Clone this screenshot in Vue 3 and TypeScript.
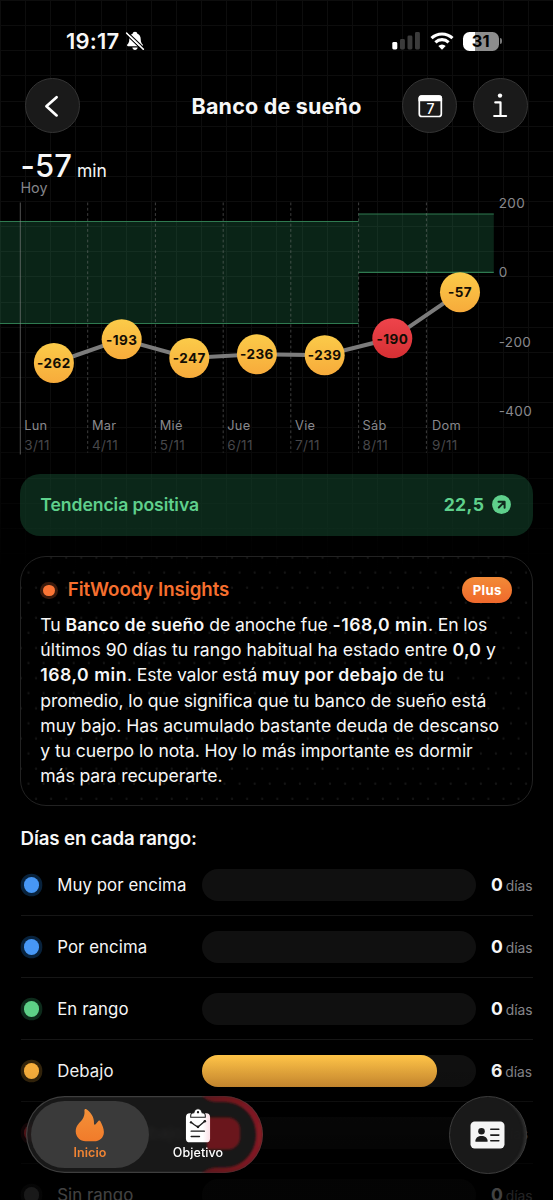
<script setup lang="ts">
interface DayPoint {
  day: string
  date: string
  value: number
  x: number
  y: number
  labelX: number
  low?: boolean
}
interface RangeRow {
  name: string
  tone: string
  days: number
}

const points: DayPoint[] = [
  { day: 'Lun', date: '3/11', value: -262, x: 53.9, y: 163, labelX: 24.2 },
  { day: 'Mar', date: '4/11', value: -193, x: 121.7, y: 139.3, labelX: 92 },
  { day: 'Mié', date: '5/11', value: -247, x: 189.3, y: 158, labelX: 159.7 },
  { day: 'Jue', date: '6/11', value: -236, x: 256.9, y: 154.2, labelX: 227.2 },
  { day: 'Vie', date: '7/11', value: -239, x: 324.7, y: 155.2, labelX: 295 },
  { day: 'Sáb', date: '8/11', value: -190, x: 392.3, y: 138.3, labelX: 362.6, low: true },
  { day: 'Dom', date: '9/11', value: -57, x: 460, y: 92.2, labelX: 432 },
]
const linePoints = points.map((p) => `${p.x},${p.y}`).join(' ')
const dividers = [87.7, 155.4, 223.2, 290.8, 358.6, 426.4]
const axis = [
  { label: '200', y: 7.6 },
  { label: '0', y: 77 },
  { label: '-200', y: 146.6 },
  { label: '-400', y: 216 },
]

const ranges: RangeRow[] = [
  { name: 'Muy por encima', tone: 'blue', days: 0 },
  { name: 'Por encima', tone: 'blue', days: 0 },
  { name: 'En rango', tone: 'green', days: 0 },
  { name: 'Debajo', tone: 'amber', days: 6 },
  { name: 'Muy por debajo', tone: 'red', days: 1 },
  { name: 'Sin rango', tone: 'gray', days: 0 },
]
const fillWidth = (days: number): string => `${(days / 7) * 100}%`
</script>

<template>
  <main class="page">
    <div class="status">
      <div class="clock">
        <span class="time">19:17</span>
        <svg class="bell" width="20" height="20" viewBox="0 0 20 20">
          <path d="M10 .8c1.400 0 2.200.9 2.400 2 2.200.8 3.300 2.600 3.300 5.200 0 3.400.9 4.300 2 5.600.5.7.2 1.600-.8 1.600H3.100c-1 0-1.300-.9-.8-1.600 1.100-1.300 2-2.200 2-5.600 0-2.600 1.100-4.400 3.300-5.200C7.800 1.700 8.600.8 10 .8z" fill="#fff" />
          <path d="M7.300 16.500h5.400c-.3 1.500-1.300 2.400-2.700 2.400s-2.400-.9-2.700-2.400z" fill="#fff" />
          <path d="M.9 3.300 17.200 19" stroke="#000" stroke-width="1.100" />
          <path d="M1.700 2.200 18.300 18.200" stroke="#fff" stroke-width="1.700" stroke-linecap="round" />
          <path d="M2.700 1.100 19.300 17.100" stroke="#000" stroke-width="1.100" />
        </svg>
      </div>
      <div class="radios">
        <svg width="29" height="20" viewBox="0 0 29 20">
          <rect x=".3" y="11" width="5" height="7.400" rx="1.400" fill="#fff" />
          <rect x="8" y="8" width="4.900" height="10.400" rx="1.400" fill="#3b3b3b" />
          <rect x="15.500" y="4.600" width="4.900" height="13.800" rx="1.400" fill="#3b3b3b" />
          <rect x="23" y="1" width="4.900" height="17.400" rx="1.400" fill="#3b3b3b" />
        </svg>
        <svg class="wifi" width="24" height="18" viewBox="0 0 24 18" fill="none" stroke="#fff" stroke-width="3.100">
          <path d="M1.500 6.200a15.200 15.200 0 0 1 21 0" />
          <path d="M5.400 10.300a9.600 9.600 0 0 1 13.200 0" />
          <path d="M12 17.700 8.300 13.900a5.300 5.300 0 0 1 7.400 0z" fill="#fff" stroke="none" />
        </svg>
        <div class="battery"><span class="cell">31</span><span class="tip"></span></div>
      </div>
    </div>

    <header class="top">
      <button class="round" aria-label="Atrás">
        <svg width="54" height="54" viewBox="0 0 54 54"><path d="M30.600 18.200 20.400 27.200 30.600 36.400" fill="none" stroke="#fff" stroke-width="2.700" stroke-linecap="round" stroke-linejoin="round" /></svg>
      </button>
      <h1>Banco de sueño</h1>
      <div class="actions">
        <button class="round" aria-label="Calendario">
          <svg width="54" height="54" viewBox="0 0 54 54">
            <rect x="16.300" y="17" width="22" height="20.500" rx="2.600" fill="none" stroke="#fff" stroke-width="1.700" />
            <path d="M15.500 22.300v-3.100a3 3 0 0 1 3-3h17.600a3 3 0 0 1 3 3v3.100z" fill="#fff" />
            <text class="seven" x="27.400" y="34.700" text-anchor="middle">7</text>
          </svg>
        </button>
        <button class="round" aria-label="Información">
          <svg width="54" height="54" viewBox="0 0 54 54">
            <circle cx="27" cy="16.600" r="2.200" fill="#fff" />
            <path d="M22.300 23.400h5.200v13.500M21.200 37h11.900" fill="none" stroke="#fff" stroke-width="2.200" stroke-linecap="round" stroke-linejoin="round" />
          </svg>
        </button>
      </div>
    </header>

    <section class="summary">
      <div class="value"><span class="num">-57</span><span class="unit">min</span></div>
      <div class="when">Hoy</div>
    </section>

    <svg class="chart" width="553" height="262" viewBox="0 0 553 262">
      <defs>
        <linearGradient id="amberDot" x1="0" y1="0" x2="0" y2="1">
          <stop offset="0" stop-color="#fbcb49" /><stop offset="1" stop-color="#f7ab3b" />
        </linearGradient>
        <linearGradient id="redDot" x1="0" y1="0" x2="0" y2="1">
          <stop offset="0" stop-color="#ee444b" /><stop offset="1" stop-color="#d62f33" />
        </linearGradient>
      </defs>
      <g class="band">
        <rect x="0" y="21.300" width="358.600" height="102.300" />
        <rect x="358.600" y="14" width="135.200" height="58.400" />
      </g>
      <path class="bound" d="M0 21.500H358.600M0 123.500H358.600M358.600 14H493.800M358.600 72.400H493.800" />
      <line class="edge" x1="20.300" y1="2.500" x2="20.300" y2="254.500" />
      <line v-for="x in dividers" :key="x" class="divider" :x1="x" y1="2.500" :x2="x" y2="252.500" />
      <polyline class="trace" :points="linePoints" />
      <g v-for="p in points" :key="p.date">
        <circle :cx="p.x" :cy="p.y" r="20" :fill="p.low ? 'url(#redDot)' : 'url(#amberDot)'" />
        <text class="point" :x="p.x" :y="p.y + 5.2" text-anchor="middle">{{ p.value }}</text>
        <text class="day" :x="p.labelX" y="230.200">{{ p.day }}</text>
        <text class="date" :x="p.labelX" y="249.600">{{ p.date }}</text>
      </g>
      <text v-for="a in axis" :key="a.label" class="axis" x="498.800" :y="a.y">{{ a.label }}</text>
    </svg>

    <section class="trend">
      <span>Tendencia positiva</span>
      <span class="score">
        <b>22,5</b>
        <svg width="19" height="19" viewBox="0 0 19 19">
          <circle cx="9.500" cy="9.500" r="9.400" fill="#5fd08c" />
          <path d="M6.500 6.700h6.100v6M12.200 7.100l-5.400 5.400" fill="none" stroke="#10291d" stroke-width="2" stroke-linecap="round" stroke-linejoin="round" />
        </svg>
      </span>
    </section>

    <section class="insights">
      <div class="insights-head">
        <i class="spark"></i>
        <h2>FitWoody Insights</h2>
        <span class="plus">Plus</span>
      </div>
      <p>
        <span>Tu <b>Banco de sueño</b> de anoche fue <b class="figure">-168,0 min</b>. En los</span><br />
        <span class="loose">últimos 90 días tu rango habitual ha estado entre <b>0,0</b> y</span><br />
        <span><b class="figure">168,0 min</b>. Este valor está <b>muy por debajo</b> de tu</span><br />
        <span>promedio, lo que significa que tu banco de sueño está</span><br />
        <span class="open">muy bajo. Has acumulado bastante deuda de descanso</span><br />
        <span>y tu cuerpo lo nota. Hoy lo más importante es dormir</span><br />
        <span>más para recuperarte.</span>
      </p>
    </section>

    <section class="ranges">
      <h3>Días en cada rango:</h3>
      <div v-for="r in ranges" :key="r.name" class="row" :class="r.tone">
        <i class="dot"></i>
        <span class="name">{{ r.name }}</span>
        <div class="track"><div v-if="r.days" class="fill" :style="{ width: fillWidth(r.days) }"></div></div>
        <span class="count"><b>{{ r.days }}</b> <small>días</small></span>
      </div>
    </section>

    <div class="fade"></div>

    <nav class="dock">
      <svg class="glow" width="237" height="77" viewBox="0 0 237 77">
        <defs>
          <linearGradient id="rim" x1="0" y1="0" x2="1" y2="0">
            <stop offset="0" stop-color="#5f161b" /><stop offset="1" stop-color="#851a22" />
          </linearGradient>
          <filter id="soft" x="-20%" y="-20%" width="140%" height="140%"><feGaussianBlur stdDeviation="1" /></filter>
        </defs>
        <g filter="url(#soft)">
          <path d="M176 0h22.500a38.500 38.500 0 0 1 0 77H176c4-3 8-5 13-5.500h9.500c18 0 31.500-15 31.500-33S216 6 198 6h-9c-6-.6-10-3-13-6z" fill="url(#rim)" />
          <path d="M181 21.500h21a12 12 0 0 1 12 12v8a12 12 0 0 1-12 12h-21z" fill="#6b171c" />
        </g>
      </svg>
      <div class="tab active">
        <svg width="30" height="34" viewBox="0 0 30 34">
          <path d="M11.400.8c3.600 2.400 8 7.200 7.600 14.400 0 1 .9 1.300 1.600.6l3-3.500c.5-.6 1.300-.5 1.600.2 1.900 4 3.700 7 3.700 11 0 6.200-5.200 9.300-9.500 9.300h-8.800C5.400 32.800.7 28.700.7 22.800c0-6.800 5.200-8.700 7.600-13.500C9.800 6.300 9.600 3.600 9.400 2c-.1-1.200.9-1.900 2-1.200z" fill="url(#flame)" />
          <defs><linearGradient id="flame" x1="0" y1="0" x2="0" y2="1"><stop offset="0" stop-color="#f39139" /><stop offset="1" stop-color="#f17b2a" /></linearGradient></defs>
        </svg>
        <span>Inicio</span>
      </div>
      <div class="tab">
        <svg width="26" height="36" viewBox="0 0 26 36">
          <defs><linearGradient id="sheet" x1="0" y1="0" x2="1" y2="0"><stop offset=".7" stop-color="#fff" /><stop offset="1" stop-color="#fbdfe6" /></linearGradient></defs>
          <rect x=".6" y="5.300" width="24.800" height="30" rx="4" fill="url(#sheet)" />
          <path d="M5.500 9.500V7.800c0-2 1.300-3 3.200-3C9.200 2.500 10.700.8 13 .8s3.800 1.700 4.300 4c1.900 0 3.200 1 3.200 3v1.700z" fill="#fff" stroke="#1c1c1c" stroke-width="1.100" />
          <circle cx="13" cy="4.400" r="1.200" fill="#1c1c1c" />
          <path d="M5.800 14.700 9.200 17.200 13 19.600 20.200 13.400" fill="none" stroke="#1c1c1c" stroke-width="1.400" stroke-linecap="round" stroke-linejoin="round" />
          <g fill="#1c1c1c"><circle cx="5.800" cy="14.700" r="1.200" /><circle cx="13" cy="19.400" r="1.300" /><circle cx="20" cy="13.600" r="1.300" /></g>
          <path d="M6 23.800h13.500M6 29.400h8.500" stroke="#1c1c1c" stroke-width="1.500" stroke-linecap="round" />
        </svg>
        <span>Objetivo</span>
      </div>
    </nav>

    <button class="profile" aria-label="Perfil">
      <svg width="35" height="28" viewBox="0 0 35 28">
        <rect x=".5" y=".5" width="34" height="27" rx="4.200" fill="#f4f4f4" />
        <circle cx="11.500" cy="10.300" r="3.300" fill="#1b1b1b" />
        <path d="M5.300 20.200c.3-3.300 2.700-5.100 6.200-5.100s5.900 1.800 6.200 5.100c0 .3-.2.500-.5.500H5.800c-.3 0-.5-.2-.5-.5z" fill="#1b1b1b" />
        <path d="M20.800 8.200h8M20.800 14.100h8M20.800 19.700h8" stroke="#1b1b1b" stroke-width="1.600" stroke-linecap="round" />
      </svg>
    </button>
  </main>
</template>

<style>
html,
body {
  background: #000;
}
</style>

<style scoped>
.page {
  position: relative;
  box-sizing: border-box;
  width: 553px;
  height: 1200px;
  overflow: hidden;
  color: #f7f7f7;
  font-family: Inter, "Liberation Sans", sans-serif;
  background:
    linear-gradient(#0000 400px, #000 570px),
    repeating-linear-gradient(90deg, #0d0d0d 0 1px, #0000 1px 25.136px),
    repeating-linear-gradient(#0d0d0d 0 1px, #0000 1px 25.136px),
    #000;
}
button {
  padding: 0;
  font: inherit;
  color: inherit;
}
h1, h2, h3, p {
  margin: 0;
}
.status {
  display: flex;
  justify-content: space-between;
  align-items: center;
  height: 78px;
  padding: 4px 51.5px 0 66px;
  box-sizing: border-box;
}
.clock {
  display: flex;
  align-items: center;
  gap: 4px;
}
.time {
  width: 54.5px;
  white-space: nowrap;
  font-size: 22px;
  font-weight: 600;
  letter-spacing: 0.2px;
}
.radios {
  display: flex;
  align-items: center;
}
.wifi {
  margin: 0 9.5px 0 8.5px;
}
.battery {
  display: flex;
  align-items: center;
  gap: 1px;
}
.cell {
  width: 35.5px;
  height: 19px;
  border-radius: 6.5px;
  background: linear-gradient(90deg, #fff 11.5px, #8d8d8d 11.5px);
  color: #000;
  font-size: 16.5px;
  font-weight: 700;
  line-height: 19.5px;
  text-align: center;
}
.tip {
  width: 2px;
  height: 6px;
  border-radius: 0 3px 3px 0;
  background: #777;
}
.top {
  display: grid;
  grid-template-columns: 1fr auto 1fr;
  align-items: center;
  height: 55px;
  padding: 0 25px;
}
h1 {
  font-size: 21.5px;
  font-weight: 650;
  line-height: 26px;
  letter-spacing: 0.2px;
}
.round {
  display: flex;
  align-items: center;
  justify-content: center;
  box-sizing: border-box;
  width: 55px;
  height: 55px;
  border: 1px solid #343434;
  border-radius: 50%;
  background: #1a1a1a;
}
.round svg {
  flex: none;
}
.actions {
  display: flex;
  justify-content: flex-end;
  gap: 15.5px;
  margin-right: 0.5px;
}
.seven {
  fill: #fff;
  font-size: 14px;
  font-weight: 500;
}
.summary {
  height: 67px;
  padding: 14px 20.5px 0;
  box-sizing: border-box;
}
.value {
  display: flex;
  align-items: baseline;
  height: 34px;
  gap: 5px;
  line-height: 38px;
}
.num {
  font-size: 31px;
  font-weight: 500;
  letter-spacing: 0.1px;
}
.unit {
  font-size: 17.5px;
  line-height: 18px;
}
.when {
  color: #85858a;
  font-size: 14.3px;
  line-height: 14px;
}
.chart {
  display: block;
  overflow: visible;
}
.chart text {
  font-family: Inter, "Liberation Sans", sans-serif;
}
.band {
  fill: #2fa567;
  fill-opacity: 0.22;
}
.bound {
  fill: none;
  stroke: #2f7a50;
  stroke-width: 1.2;
}
.edge {
  stroke: #8a8a8a;
  stroke-opacity: 0.6;
  stroke-width: 1;
}
.divider {
  stroke: #8a8a8a;
  stroke-opacity: 0.45;
  stroke-width: 1;
  stroke-dasharray: 2.8 2.5;
}
.trace {
  fill: none;
  stroke: #7c7c7c;
  stroke-width: 4;
}
.point {
  fill: #120d04;
  font-size: 13.5px;
  font-weight: 700;
  letter-spacing: 0.45px;
}
.day,
.axis {
  fill: #89898d;
  font-size: 12.8px;
  letter-spacing: 0.3px;
}
.axis {
  font-size: 13.5px;
}
.date {
  fill: #47474a;
  font-size: 13.5px;
  letter-spacing: 0.35px;
}
.trend {
  display: flex;
  align-items: center;
  justify-content: space-between;
  height: 62px;
  margin: 12.3px 20.3px 0;
  padding: 0 21.3px 1px 20px;
  box-sizing: border-box;
  border-radius: 20px;
  background: rgba(47, 165, 103, 0.24);
  color: #5fd08c;
  font-size: 17.6px;
  font-weight: 600;
  letter-spacing: -0.07px;
}
.score {
  display: flex;
  align-items: center;
  gap: 8px;
}
.score b {
  font-weight: 700;
  letter-spacing: 0.4px;
}
.insights {
  height: 250px;
  margin: 20.2px 20.3px 0;
  padding: 20px 19.500px 0 19px;
  box-sizing: border-box;
  border: 1px solid #222;
  border-radius: 26px;
  background:
    radial-gradient(circle at 7.5px 7.5px, #141414 0.9px, #0000 1.5px) -7.500px -7px / 15.080px 30.160px,
    radial-gradient(circle at 7.5px 7.5px, #141414 0.9px, #0000 1.5px) 0 8px / 15.080px 30.160px;
}
.insights-head {
  display: flex;
  align-items: center;
  height: 26px;
}
.spark {
  width: 11.5px;
  height: 11.5px;
  margin: 0 13px 0 3px;
  border-radius: 50%;
  background: #fb7535;
  box-shadow: 0 0 0 3px #3a1a0c;
}
h2 {
  color: #f66f2e;
  font-size: 18.7px;
  font-weight: 630;
  line-height: 24px;
  letter-spacing: -0.05px;
  white-space: nowrap;
}
.plus {
  width: 50px;
  margin-left: auto;
  border-radius: 13px;
  background: linear-gradient(#f28a37, #f0692c);
  color: #fff;
  font-size: 13.2px;
  font-weight: 700;
  line-height: 26px;
  letter-spacing: 0.3px;
  text-align: center;
}
p {
  margin-top: 8.7px;
  font-size: 17.6px;
  line-height: 25.14px;
  letter-spacing: -0.1px;
  white-space: nowrap;
}
p b {
  font-weight: 630;
  letter-spacing: 0.22px;
}
p .figure {
  letter-spacing: 0.52px;
}
.loose {
  letter-spacing: 0.03px;
}
.open {
  letter-spacing: -0.04px;
}
.ranges {
  padding: 20px 20.5px 0;
}
h3 {
  height: 28px;
  font-size: 18.7px;
  font-weight: 630;
  line-height: 26px;
  letter-spacing: -0.12px;
}
.row {
  display: flex;
  align-items: center;
  height: 62px;
  box-sizing: border-box;
  border-bottom: 1px solid #161616;
}
.dot {
  flex: none;
  width: 15.4px;
  height: 15.4px;
  margin: 0 18px 0 3.3px;
  border-radius: 50%;
  background: var(--tone);
  box-shadow: 0 0 0 3.3px var(--halo);
}
.name {
  flex: none;
  width: 145.3px;
  font-size: 16.8px;
  letter-spacing: 0.08px;
  white-space: nowrap;
}
.track {
  flex: none;
  width: 273.5px;
  height: 31.5px;
  border-radius: 16px;
  background: #101010;
}
.fill {
  height: 100%;
  border-radius: 16px;
  background: linear-gradient(var(--from), var(--to));
}
.count {
  margin-left: 15px;
  white-space: nowrap;
  font-size: 17.5px;
}
.count b {
  font-weight: 700;
}
.count small {
  margin-left: -2px;
  color: #85858a;
  font-size: 13.8px;
}
.blue { --tone: #4797f5; --halo: #08223c; }
.green { --tone: #5dd087; --halo: #0d2b1b; }
.amber { --tone: #f9af3c; --halo: #33240b; --from: #fdc347; --to: #d18e31; }
.red { --tone: #d8333d; --halo: #300c10; --from: #7a1d22; --to: #6a181d; }
.gray { --tone: #5c5c5e; --halo: #141414; }
.fade {
  position: absolute;
  inset: 1060px 0 0;
  background: linear-gradient(#0000, #0001 26px, #0009 56px, #000b 100px, #000b);
}
.dock {
  position: absolute;
  left: 26px;
  top: 1096px;
  display: flex;
  width: 237px;
  height: 77px;
  padding: 5px;
  box-sizing: border-box;
  border-radius: 39px;
  overflow: hidden;
  background: rgba(27, 27, 27, 0.88);
  backdrop-filter: blur(2px);
  box-shadow: inset 0 0 0 1.2px rgba(255, 255, 255, 0.17);
}
.glow {
  position: absolute;
  left: 0;
  top: 0;
}
.tab {
  position: relative;
  display: flex;
  flex-direction: column;
  align-items: center;
  width: 118px;
  height: 67px;
  padding-top: 7px;
  box-sizing: border-box;
  border-radius: 34px;
  color: #fff;
  font-size: 12.5px;
  font-weight: 500;
  letter-spacing: 0.1px;
}
.tab + .tab {
  margin-left: -10px;
}
.tab svg {
  height: 35px;
}
.tab span {
  line-height: 17px;
  margin-top: 1px;
}
.active {
  background: #3a3a3a;
  color: #f08434;
  font-weight: 600;
}
.profile {
  position: absolute;
  left: 449px;
  top: 1096px;
  display: flex;
  align-items: center;
  justify-content: center;
  width: 77.5px;
  height: 77.5px;
  box-sizing: border-box;
  border: 1.2px solid #3d3d3d;
  border-radius: 50%;
  background: rgba(26, 26, 26, 0.96);
  box-shadow: inset -4px 0 2px -2px #2c2c2c;
}
</style>
